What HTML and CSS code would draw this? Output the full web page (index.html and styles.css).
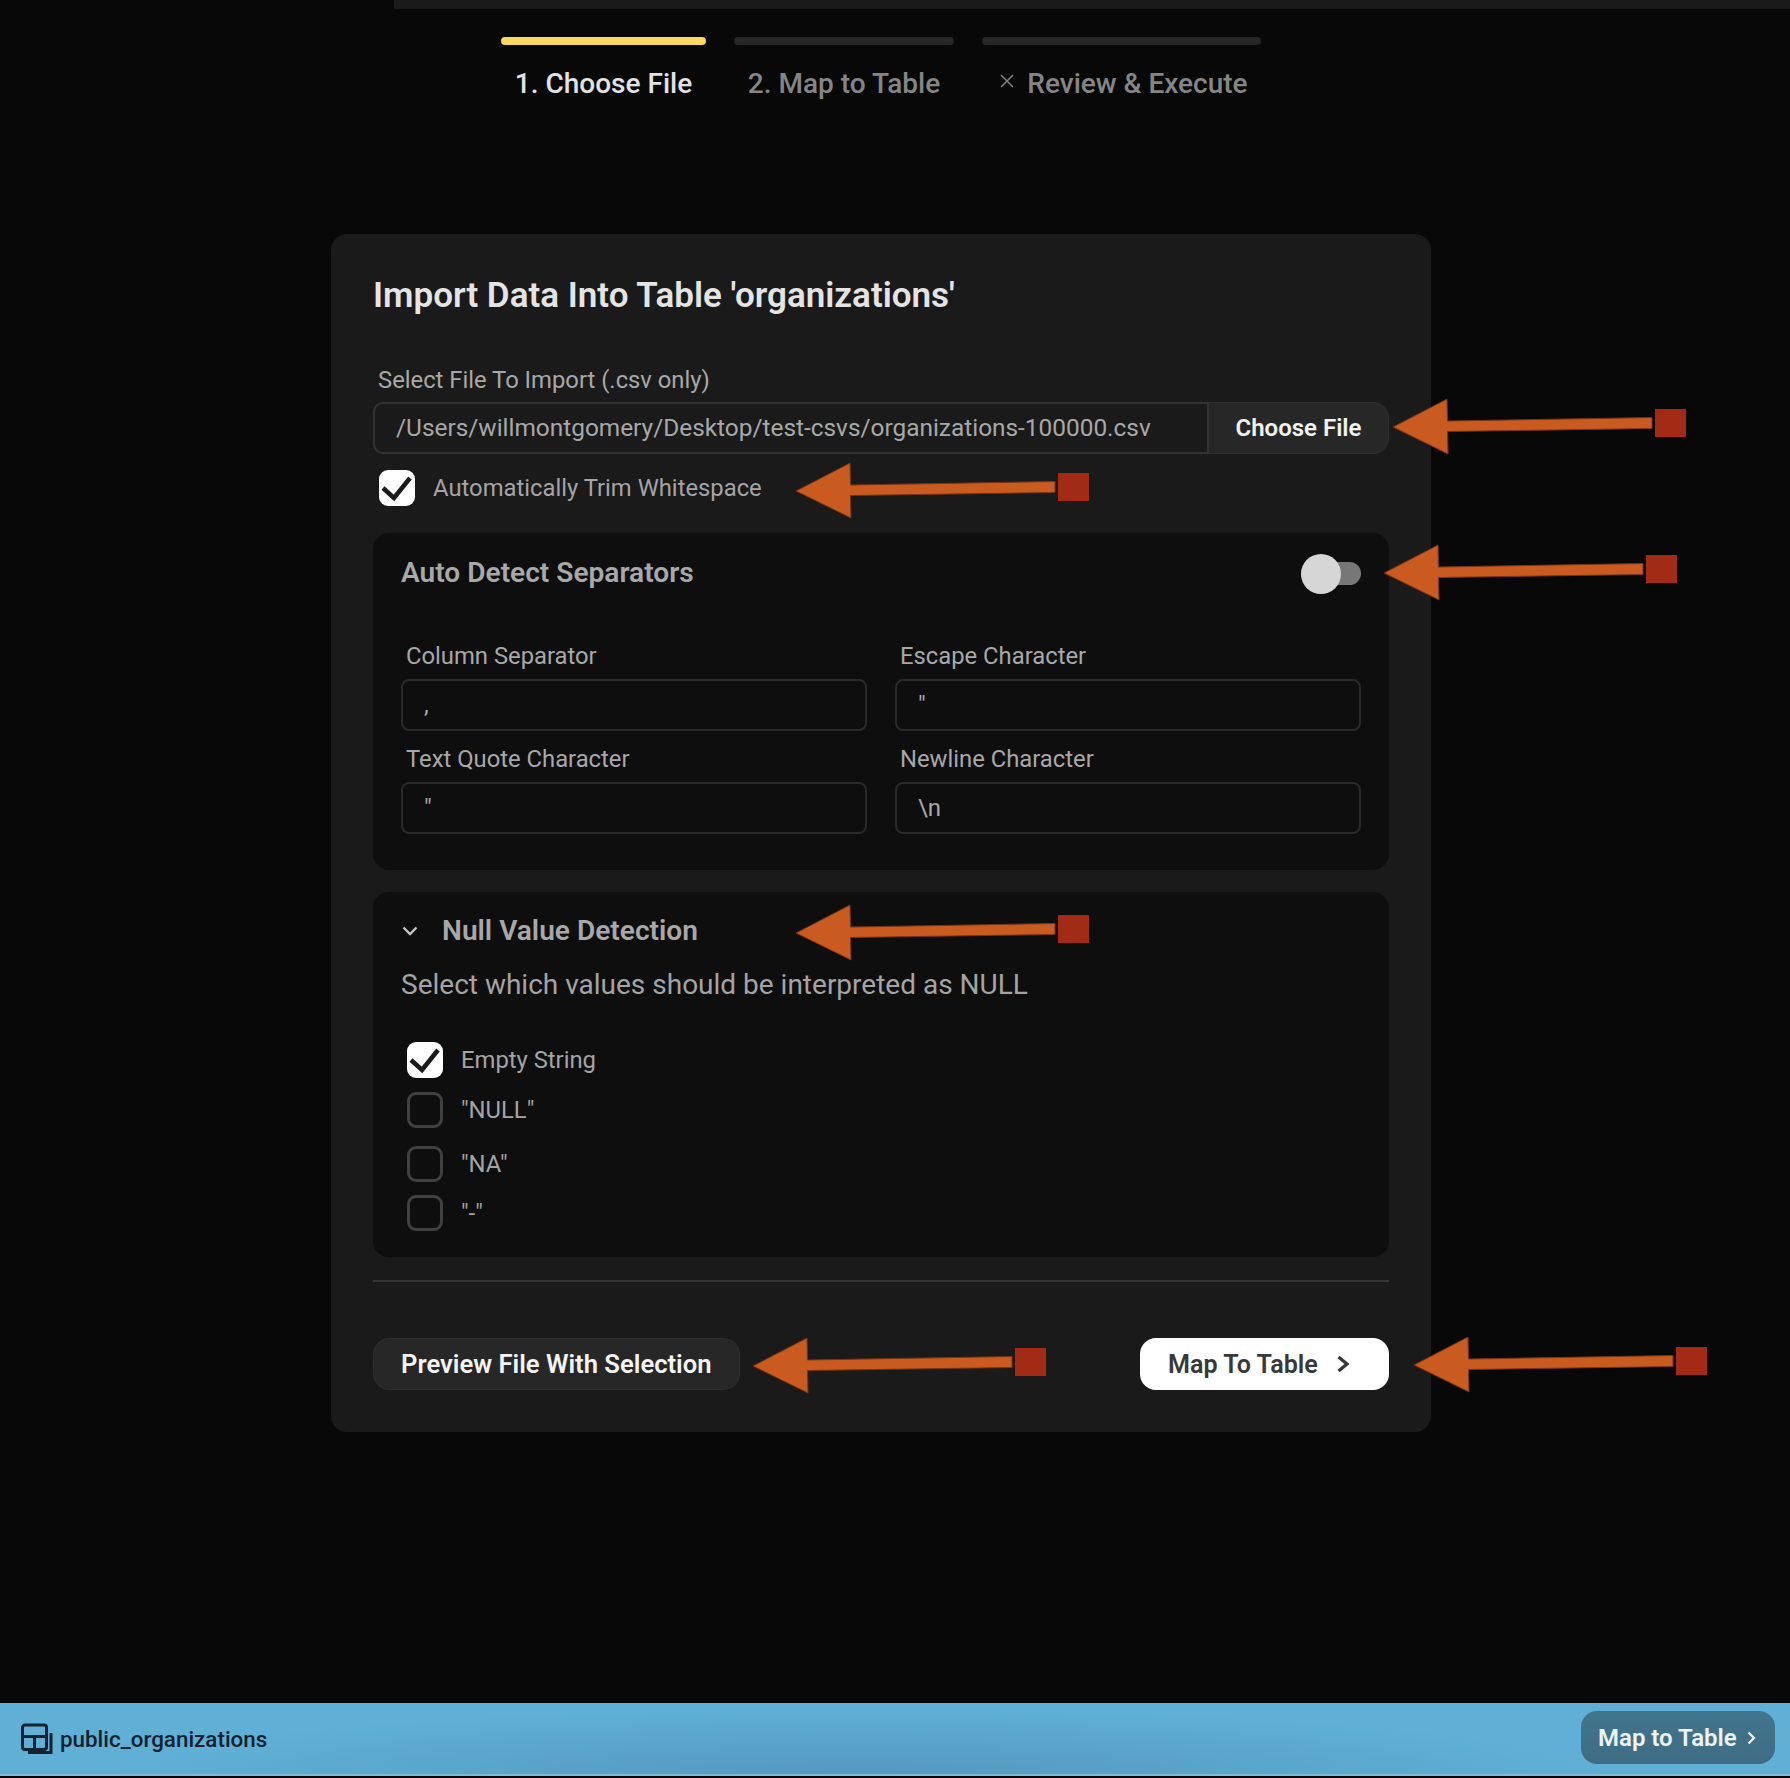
FILE: index.html
```html
<!DOCTYPE html>
<html lang="en">
<head>
<meta charset="utf-8">
<title>Import Data</title>
<link rel="stylesheet" href="styles.css">
</head>
<body>
<svg class="sprite" width="0" height="0" aria-hidden="true">
  <symbol id="callout" viewBox="0 -30 296 60">
    <polygon class="callout-shape" points="0,0 54,-28 54.5,-6 259,-9.5 259,1.5 54.5,4.500 55,27"/>
    <rect class="callout-end" x="262" y="-18" width="31" height="28"/>
  </symbol>
</svg>
<div class="topbar"></div>
<main class="main">
  <nav class="steps">
    <div class="step step-active step-one"><div class="step-bar"></div><div class="step-label">1. Choose File</div></div>
    <div class="step step-two"><div class="step-bar"></div><div class="step-label">2. Map to Table</div></div>
    <div class="step step-three"><div class="step-bar"></div><div class="step-label">
      <svg class="step-x" viewBox="0 0 16 14"><path d="M2 1l12 12M14 1L2 13"/></svg>Review &amp; Execute</div></div>
  </nav>
  <section class="card">
    <h1 class="card-title">Import Data Into Table 'organizations'</h1>
    <div class="field-label file-label">Select File To Import (.csv only)</div>
    <div class="file-row">
      <div class="file-path">/Users/willmontgomery/Desktop/test-csvs/organizations-100000.csv</div>
      <div class="file-button">Choose File</div>
    </div>
    <div class="check-row trim-row">
      <span class="box box-on"><svg viewBox="0 0 36 36"><path d="M4 18l11 10L31 8"/></svg></span>
      <span class="check-text">Automatically Trim Whitespace</span>
    </div>
    <div class="panel sep-panel">
      <div class="panel-head">
        <div class="panel-title">Auto Detect Separators</div>
        <div class="toggle"><div class="toggle-thumb"></div></div>
      </div>
      <div class="sep-grid">
        <div class="sep-field"><div class="field-label">Column Separator</div><div class="text-input">,</div></div>
        <div class="sep-field"><div class="field-label">Escape Character</div><div class="text-input">"</div></div>
        <div class="sep-field"><div class="field-label">Text Quote Character</div><div class="text-input">"</div></div>
        <div class="sep-field"><div class="field-label">Newline Character</div><div class="text-input">\n</div></div>
      </div>
    </div>
    <div class="panel null-panel">
      <div class="null-head">
        <svg class="null-chevron" viewBox="0 0 16 10"><path d="M1.500 1.500L8 8l6.500-6.500"/></svg>
        <div class="panel-title">Null Value Detection</div>
      </div>
      <div class="null-desc">Select which values should be interpreted as NULL</div>
      <div class="check-row null-row null-first">
        <span class="box box-on"><svg viewBox="0 0 36 36"><path d="M4 18l11 10L31 8"/></svg></span>
        <span class="check-text">Empty String</span>
      </div>
      <div class="check-row null-row null-second"><span class="box"></span><span class="check-text">"NULL"</span></div>
      <div class="check-row null-row null-third"><span class="box"></span><span class="check-text">"NA"</span></div>
      <div class="check-row null-row null-fourth"><span class="box"></span><span class="check-text">"-"</span></div>
    </div>
    <div class="divider"></div>
    <div class="actions">
      <div class="btn btn-dark">Preview File With Selection</div>
      <div class="btn btn-light">Map To Table
        <svg class="btn-chevron" viewBox="0 0 12 16"><path d="M1.500 1L10 8l-8.500 7"/></svg>
      </div>
    </div>
  </section>
</main>
<footer class="bottombar">
  <div class="table-name">
    <svg class="table-icon" viewBox="0 0 32 32"><path d="M4 3h19a2.500 2.500 0 0 1 2.500 2.500V25a2.500 2.500 0 0 1-2.500 2.500H4A2.500 2.500 0 0 1 1.500 25V5.500A2.500 2.500 0 0 1 4 3zM1.500 14.500h24M13.500 14.500v13M30 11v19.500H7"/></svg>
    <span>public_organizations</span>
  </div>
  <div class="bar-button">Map to Table
    <svg class="bar-chevron" viewBox="0 0 9 14"><path d="M1.500 1.500L7 7l-5.500 5.500"/></svg>
  </div>
</footer>
<svg class="callout callout-file"><use href="#callout"/></svg>
<svg class="callout callout-trim"><use href="#callout"/></svg>
<svg class="callout callout-toggle"><use href="#callout"/></svg>
<svg class="callout callout-null"><use href="#callout"/></svg>
<svg class="callout callout-preview"><use href="#callout"/></svg>
<svg class="callout callout-map"><use href="#callout"/></svg>
</body>
</html>
```
FILE: styles.css
```css
* { box-sizing: border-box; }
html, body { margin: 0; padding: 0; }
body {
  position: relative;
  width: 1790px;
  height: 1778px;
  background: #080808;
  font-family: Roboto, "Liberation Sans", sans-serif;
  color: #a8a8a8;
  display: flex;
  flex-direction: column;
  overflow: hidden;
}
.sprite { position: absolute; }
.topbar { height: 9px; margin-left: 394px; background: #1a1a1a; flex: none; }
.main { flex: 1; display: flex; flex-direction: column; align-items: center; padding-right: 28px; }

.steps { display: flex; gap: 28px; margin-top: 28px; height: 197px; }
.step-one { width: 205px; }
.step-two { width: 220px; }
.step-three { width: 279px; }
.step-three .step-label { padding-left: 4px; }
.step-bar { height: 8px; border-radius: 4px; background: #262626; }
.step-active .step-bar { background: #f8d85e; }
.step-label {
  margin-top: 21px; height: 36px; line-height: 36px; text-align: center;
  font-size: 28px; font-weight: 500; color: #858585; white-space: nowrap;
}
.step-active .step-label { color: #e2e2e2; }
.step-x { width: 16px; height: 14px; margin-right: 12px; position: relative; top: -5px; fill: none; stroke: #858585; stroke-width: 1.500; }

.card {
  width: 1100px; height: 1198px; padding: 39px 42px 0;
  background: #1a1a1a; border-radius: 16px;
}
.card-title { margin: 0; height: 44px; line-height: 46px; font-size: 35px; font-weight: 600; color: #e4e4e4; }
.field-label { height: 26px; line-height: 26px; font-size: 23.800px; color: #a8a8a8; padding-left: 5px; white-space: nowrap; }
.file-label { margin-top: 50px; }
.file-row { display: flex; margin-top: 9px; height: 52px; }
.file-path {
  width: 836px; padding-left: 21px; line-height: 48px; font-size: 24.400px; color: #a8a8a8; white-space: nowrap;
  border: 2px solid #333; border-radius: 10px 0 0 10px;
}
.file-button {
  flex: 1; background: #272727; border: 1px solid #2e2e2e; border-left: 0; border-radius: 0 16px 16px 0;
  color: #f2f2f2; font-size: 24px; font-weight: 600; text-align: center; line-height: 50px;
}
.check-row { display: flex; align-items: center; }
.trim-row { margin-top: 16px; padding-left: 6px; }
.box {
  flex: none; width: 36px; height: 36px; border-radius: 9px; border: 3.500px solid #404040; display: block;
}
.box-on { background: #fff; border: 0; }
.box svg { display: block; width: 36px; height: 36px; fill: none; stroke: #1a1a1a; stroke-width: 4.500; }
.check-text { margin-left: 18px; font-size: 23.800px; color: #a4a4a4; white-space: nowrap; }

.panel { background: #0e0e0e; border-radius: 16px; padding: 0 28px; }
.sep-panel { margin-top: 27px; height: 337px; padding-top: 20px; }
.panel-head { display: flex; justify-content: space-between; align-items: center; height: 40px; }
.panel-title { font-size: 28.100px; font-weight: 600; line-height: 40px; color: #a8a8a8; white-space: nowrap; }
.toggle { position: relative; width: 60px; height: 23px; border-radius: 12px; background: #777; }
.toggle-thumb { position: absolute; left: 0; top: -8px; width: 40px; height: 40px; border-radius: 50%; background: #d6d6d6; }
.sep-grid { display: grid; grid-template-columns: 1fr 1fr; column-gap: 28px; row-gap: 15px; margin-top: 50px; }
.text-input {
  margin-top: 10px; height: 52px; border: 2px solid #2a2a2a; border-radius: 8px; padding-left: 21px;
  font-size: 24px; line-height: 49px; color: #a8a8a8;
}

.null-panel { margin-top: 22px; height: 365px; padding-top: 19px; }
.null-head { display: flex; align-items: center; height: 40px; }
.null-chevron { width: 16px; height: 10px; margin-right: 24px; margin-left: 1px; fill: none; stroke: #c4c4c4; stroke-width: 2.400; }
.null-desc { margin-top: 16px; height: 36px; line-height: 36px; font-size: 28px; color: #a4a4a4; white-space: nowrap; }
.null-row { padding-left: 6px; height: 36px; }
.null-row .check-text { margin-left: 18px; }
.null-first { margin-top: 39px; }
.null-second { margin-top: 14px; }
.null-third { margin-top: 18px; }
.null-fourth { margin-top: 13px; }

.divider { height: 2px; background: #353535; margin-top: 23px; }
.actions { display: flex; justify-content: space-between; margin-top: 56px; }
.btn { height: 52px; border-radius: 16px; display: flex; align-items: center; padding: 0 28px; font-size: 25.100px; font-weight: 600; white-space: nowrap; }
.btn-dark { width: 367px; padding-left: 27px; font-size: 25.600px; background: #272727; border: 1px solid #2e2e2e; color: #f4f4f4; }
.btn-light { width: 249px; background: #fff; color: #383838; }
.btn-chevron { width: 12px; height: 16px; margin-left: 19px; fill: none; stroke: #383838; stroke-width: 3.200; }

.bottombar {
  flex: none; height: 73px; margin-bottom: 2px; padding: 0 15px 2px 21px;
  background: radial-gradient(ellipse 42% 95% at 48% 100%, rgba(72, 130, 165, 0.5), rgba(72, 130, 165, 0) 100%), #60b0d6;
  border-bottom: 2px solid #7dbcd9;
  display: flex; align-items: center; justify-content: space-between;
}
.table-name { display: flex; align-items: center; font-size: 22.400px; font-weight: 500; color: #12222e; }
.table-name span { position: relative; top: 1px; }
.table-icon { width: 32px; height: 32px; margin-right: 7px; fill: none; stroke: #12222e; stroke-width: 3; }
.bar-button {
  width: 194px; height: 53px; border-radius: 16px; background: linear-gradient(#41758e, #3f6c84); color: #eef3f6;
  font-size: 24px; font-weight: 600; display: flex; align-items: center; padding: 1px 0 0 17px; white-space: nowrap;
}
.bar-chevron { width: 9px; height: 14px; margin-left: 10px; fill: none; stroke: #eef3f6; stroke-width: 2.200; }

.callout { position: absolute; width: 296px; height: 60px; overflow: visible; }
.callout-shape { fill: #c95a20; stroke: #7a3315; stroke-width: 1; }
.callout-end { fill: #a32a15; }
.callout-file { left: 1393px; top: 397px; }
.callout-trim { left: 796px; top: 461px; }
.callout-toggle { left: 1384px; top: 543px; }
.callout-null { left: 796px; top: 903px; }
.callout-preview { left: 753px; top: 1336px; }
.callout-map { left: 1414px; top: 1335px; }
```
